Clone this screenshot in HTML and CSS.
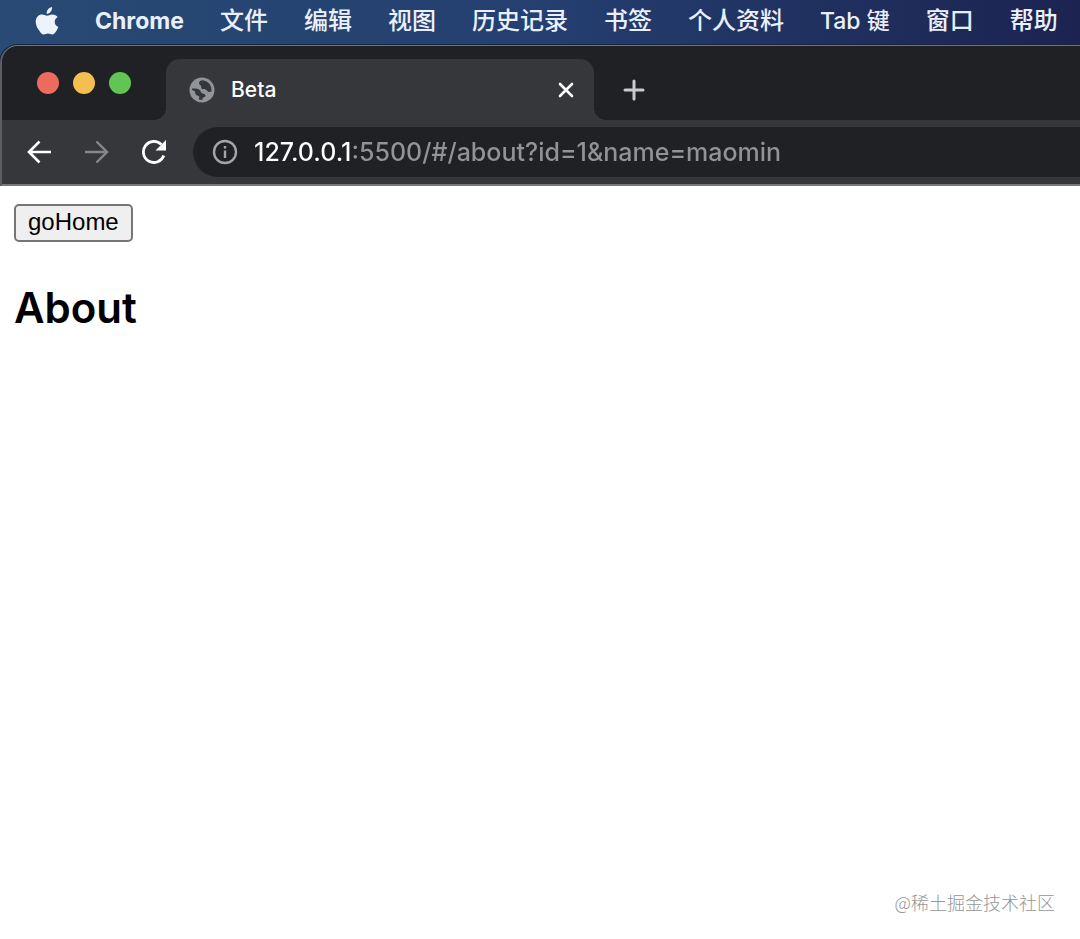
FILE: index.html
```html
<!DOCTYPE html>
<html lang="zh-CN">
<head>
    <meta charset="UTF-8">
    <meta name="viewport" content="width=device-width, initial-scale=1.0">
    <title>Beta</title>
    <link rel="stylesheet" href="styles.css">
</head>
<body>
    <nav class="menubar">
        <button class="menu-item" aria-label="Apple">
            <svg width="24" height="28" viewBox="0 0 24 28" fill="#eef2fa">
                <path d="M17 0c.3 2-.5 3.700-1.500 4.900C14.500 6.100 13 6.900 11.700 6.700c-.2-1.700.6-3.500 1.600-4.600C14.300 1 15.800.2 17 0zM22.700 9.900c-1.900 1.200-3 2.800-3 4.800 0 2.300 1.400 4.300 3.600 5.200-.5 1.600-1.300 3.100-2.300 4.500-1 1.500-2.100 3-3.700 3-1.700 0-2.200-1-4.300-1-2 0-2.700 1-4.300 1-1.700 0-2.900-1.600-4-3.200C2.400 21.500.7 18.200.7 14.800c0-4.600 3-7.300 6.300-7.300 2 0 3.600 1.200 5 1.200 1.200 0 3-1.300 5.400-1.300 2.200 0 4.100.9 5.300 2.500z"/>
            </svg>
        </button>
        <button class="menu-item app-name">Chrome</button>
        <button class="menu-item">文件</button>
        <button class="menu-item">编辑</button>
        <button class="menu-item">视图</button>
        <button class="menu-item">历史记录</button>
        <button class="menu-item">书签</button>
        <button class="menu-item">个人资料</button>
        <button class="menu-item mixed">Tab 键</button>
        <button class="menu-item">窗口</button>
        <button class="menu-item">帮助</button>
    </nav>

    <div class="browser">
        <header class="frame">
            <div class="tab-strip">
                <div class="lights">
                    <button class="light red" aria-label="关闭"></button>
                    <button class="light yellow" aria-label="最小化"></button>
                    <button class="light green" aria-label="缩放"></button>
                </div>
                <div class="tab">
                    <svg width="26" height="26" viewBox="0 0 26 26">
                        <circle cx="13" cy="13" r="12.500" fill="#919498"/>
                        <path d="M14 3.300c-2.500.2-4.500 1.500-4 3.200.5 1.500 1.500 1.200 2 2.500.4 1.200 0 2 .8 2.800 1 .8 2.700.2 4.200 1 1.200.6 1.500 2.200 3 2.200 1 0 1.800-.3 2.600-.5A10 10 0 0 0 14 3.300z" fill="#36373b"/>
                        <path d="M3 11.500c2.500 0 5.800-.2 7.500 1.200 1.500 1.300 1.200 2.800 2.600 3.600 1.300.7 3.200.6 3.400 2.200.1 1.500-1.700 1.600-2.500 2.300-.6.6-.5 1.200-.5 2-1.200.2-2.400 0-3.500-.3-.2-1.200.2-2 .3-3-1-.9-2.600-.8-3.500-1.900-.9-1-.3-2-1-3C5 13.500 4 13.500 3 13z" fill="#36373b"/>
                    </svg>
                    <span class="tab-title">Beta</span>
                    <button class="tab-close" aria-label="关闭标签页">
                        <svg width="16" height="16" viewBox="0 0 16 16" stroke="#fff" stroke-width="2.600" stroke-linecap="round">
                            <path d="M2 2l12 12M14 2L2 14"/>
                        </svg>
                    </button>
                </div>
                <button class="new-tab" aria-label="新标签页">
                    <svg width="24" height="24" viewBox="0 0 24 24" stroke="#c8cacd" stroke-width="3" stroke-linecap="round">
                        <path d="M12 3v18M3 12h18"/>
                    </svg>
                </button>
            </div>

            <div class="toolbar">
                <button class="nav-button" aria-label="后退">
                    <svg width="26" height="26" viewBox="0 0 26 26" fill="none" stroke="#fff" stroke-width="2.600">
                        <path d="M25 13H3M13.500 2.500L3 13l10.500 10.500"/>
                    </svg>
                </button>
                <button class="nav-button" aria-label="前进" disabled>
                    <svg width="26" height="26" viewBox="0 0 26 26" fill="none" stroke="#86888b" stroke-width="2.400">
                        <path d="M2 13h22M13.500 2.500L24 13 13.500 23.500"/>
                    </svg>
                </button>
                <button class="nav-button" aria-label="重新加载">
                    <svg width="26" height="26" viewBox="0 0 26 26">
                        <path d="M23.800 16.500A10.500 10.500 0 1 1 21.400 5.600" fill="none" stroke="#fff" stroke-width="2.800"/>
                        <path d="M26 1v10.500H15.500z" fill="#fff"/>
                    </svg>
                </button>
                <div class="address">
                    <svg width="26" height="26" viewBox="0 0 26 26" fill="none" stroke="#a3a5a8" stroke-width="2.400">
                        <circle cx="13" cy="13" r="11"/>
                        <path d="M13 11.500v7.500M13 7v2.600"/>
                    </svg>
                    <input class="url" type="text" aria-label="地址" value="127.0.0.1:5500/#/about?id=1&amp;name=maomin">
                </div>
            </div>
        </header>

        <main class="page">
            <button class="go-home">goHome</button>
            <h2>About</h2>
            <p class="watermark">@稀土掘金技术社区</p>
        </main>
    </div>
</body>
</html>
```

FILE: styles.css
```css
* {
    box-sizing: border-box;
}
body {
    margin: 0;
    min-height: 100vh;
    display: flex;
    flex-direction: column;
    overflow-x: hidden;
    font-family: Inter, "Noto Sans CJK SC", sans-serif;
    background: linear-gradient(90deg, #284a74, #243f70 50%, #1c2350) top / 100% 80px no-repeat #fff;
}
button {
    padding: 0;
    border: 0;
    background: none;
    color: inherit;
    font-family: inherit;
}
svg {
    display: block;
    flex: none;
}
.menubar {
    display: flex;
    align-items: center;
    gap: 36px;
    height: 45px;
    padding: 0 0 4px 35px;
    color: #eaf0fb;
}
.menu-item {
    flex: none;
    font-size: 24px;
    line-height: 36px;
    font-weight: 500;
    white-space: nowrap;
}
.mixed {
    font-size: 23px;
}
.app-name {
    font-size: 23px;
    font-weight: 700;
}
.browser {
    flex: 1;
    display: flex;
    flex-direction: column;
}
.frame {
    border-top: 1px solid #6f7478;
    border-left: 2px solid #5b5e63;
    border-radius: 18px 0 0 0;
    box-shadow: 0 0 0 1px #17233c;
    background: #36373b;
    overflow: hidden;
}
.tab-strip {
    display: flex;
    height: 74px;
    padding-top: 13px;
    background: #202124;
}
.lights {
    display: flex;
    gap: 14px;
    width: 164px;
    padding: 13px 0 0 35px;
}
.light {
    width: 22px;
    height: 22px;
    border-radius: 50%;
}
.red {
    background: #ed6a5f;
}
.yellow {
    background: #f5bf4f;
}
.green {
    background: #61c554;
}
.tab {
    position: relative;
    display: flex;
    align-items: center;
    width: 428px;
    padding: 0 20px 0 23px;
    border-radius: 14px 14px 0 0;
    background: #36373b;
    color: #fff;
}
/* curved feet on both sides of the active tab */
.tab::before,
.tab::after {
    content: "";
    position: absolute;
    bottom: 0;
    width: 12px;
    height: 12px;
}
.tab::before {
    right: 100%;
    background: radial-gradient(circle at 0 0, #202124 12px, #36373b 12px);
}
.tab::after {
    left: 100%;
    background: radial-gradient(circle at 100% 0, #202124 12px, #36373b 12px);
}
.tab-title {
    flex: 1;
    margin-left: 16px;
    font-size: 21px;
    font-weight: 500;
}
.new-tab {
    margin-left: 28px;
}
.toolbar {
    display: flex;
    align-items: center;
    gap: 31px;
    height: 66px;
    padding-left: 24px;
    border-bottom: 2px solid #77787b;
}
.nav-button {
    flex: none;
}
.address {
    flex: 1;
    display: flex;
    align-items: center;
    gap: 16px;
    height: 50px;
    margin-left: -4px;
    padding-left: 19px;
    border-radius: 25px 0 0 25px;
    background: #202124;
}
/* host part is white, the rest of the url is dimmed */
.url {
    flex: 1;
    min-width: 0;
    padding: 0;
    border: 0;
    outline: 0;
    background: linear-gradient(90deg, #fff 98px, #929396 98px);
    -webkit-background-clip: text;
    background-clip: text;
    -webkit-text-fill-color: transparent;
    color: #929396;
    font-family: inherit;
    font-size: 25px;
    line-height: 32px;
    font-weight: 500;
}
.page {
    flex: 1;
    display: flex;
    flex-direction: column;
    align-items: flex-start;
    padding: 18px 25px 22px 14px;
    color: #000;
    background: #fff;
}
.go-home {
    height: 38px;
    padding: 0 12px 2px;
    border: 2px solid #767676;
    border-radius: 5px;
    background: #efefef;
    font-family: "Liberation Sans", Arial, sans-serif;
    font-size: 24px;
}
h2 {
    margin: 38px 0;
    font-size: 42px;
    line-height: 56px;
    font-weight: 600;
}
.watermark {
    align-self: flex-end;
    margin: auto 0 0;
    color: #969696;
    font-family: "Noto Sans CJK SC", sans-serif;
    font-size: 18px;
    line-height: 30px;
    font-weight: 300;
}
```
